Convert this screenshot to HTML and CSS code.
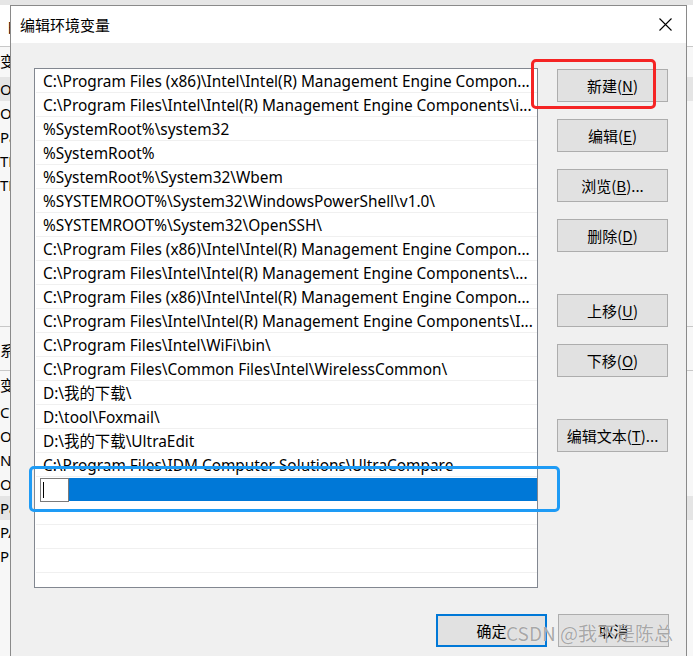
FILE: index.html
```html
<!DOCTYPE html>
<html lang="zh-CN">
<head>
    <meta charset="UTF-8">
    <title>编辑环境变量</title>
    <link rel="stylesheet" href="styles.css">
</head>
<body>
    <div class="desktop">
        <!-- window behind the dialog, only its edges show -->
        <div class="bg-window">
            <div class="bg-title">白</div>
            <div class="bg-section">
                <div class="bg-head">变</div>
                <div class="bg-row selected">On</div>
                <div class="bg-row">On</div>
                <div class="bg-row">Pa</div>
                <div class="bg-row">TE</div>
                <div class="bg-row">TM</div>
            </div>
            <div class="bg-section second">
                <div class="bg-label">系统</div>
                <div class="bg-head">变</div>
                <div class="bg-row">Co</div>
                <div class="bg-row">Or</div>
                <div class="bg-row">NU</div>
                <div class="bg-row">OS</div>
                <div class="bg-row selected">Pa</div>
                <div class="bg-row">PA</div>
                <div class="bg-row">PR</div>
            </div>
        </div>

        <div class="dialog">
            <div class="titlebar">
                <span class="title">编辑环境变量</span>
                <span class="close">
                    <svg width="13" height="13" viewBox="0 0 13 13">
                        <path d="M0.5 0.5 L12.5 12.5 M12.5 0.5 L0.5 12.5" stroke="#000" stroke-width="1.1" fill="none"/>
                    </svg>
                </span>
            </div>
            <div class="client">
                <div class="main">
                    <div class="listbox">
                        <div class="row">C:\Program Files (x86)\Intel\Intel(R) Management Engine Compon...</div>
                        <div class="row">C:\Program Files\Intel\Intel(R) Management Engine Components\i...</div>
                        <div class="row">%SystemRoot%\system32</div>
                        <div class="row">%SystemRoot%</div>
                        <div class="row">%SystemRoot%\System32\Wbem</div>
                        <div class="row">%SYSTEMROOT%\System32\WindowsPowerShell\v1.0\</div>
                        <div class="row">%SYSTEMROOT%\System32\OpenSSH\</div>
                        <div class="row">C:\Program Files (x86)\Intel\Intel(R) Management Engine Compon...</div>
                        <div class="row">C:\Program Files\Intel\Intel(R) Management Engine Components\...</div>
                        <div class="row">C:\Program Files (x86)\Intel\Intel(R) Management Engine Compon...</div>
                        <div class="row">C:\Program Files\Intel\Intel(R) Management Engine Components\I...</div>
                        <div class="row">C:\Program Files\Intel\WiFi\bin\</div>
                        <div class="row">C:\Program Files\Common Files\Intel\WirelessCommon\</div>
                        <div class="row">D:\我的下载\</div>
                        <div class="row">D:\tool\Foxmail\</div>
                        <div class="row">D:\我的下载\UltraEdit</div>
                        <div class="row">C:\Program Files\IDM Computer Solutions\UltraCompare</div>
                        <div class="row editing">
                            <span class="edit-box"><span class="caret"></span></span>
                            <span class="fill"></span>
                        </div>
                        <div class="row"></div>
                        <div class="row"></div>
                        <div class="row"></div>
                        <div class="row"></div>
                    </div>
                    <div class="side">
                        <div class="btn-group">
                            <button class="btn">新建(<u>N</u>)</button>
                            <button class="btn">编辑(<u>E</u>)</button>
                            <button class="btn">浏览(<u>B</u>)...</button>
                            <button class="btn">删除(<u>D</u>)</button>
                        </div>
                        <div class="btn-group">
                            <button class="btn">上移(<u>U</u>)</button>
                            <button class="btn">下移(<u>O</u>)</button>
                        </div>
                        <div class="btn-group">
                            <button class="btn">编辑文本(<u>T</u>)...</button>
                        </div>
                    </div>
                </div>
                <div class="footer">
                    <button class="btn default">确定</button>
                    <button class="btn">取消</button>
                </div>
            </div>
        </div>

        <!-- annotations drawn over the screenshot -->
        <div class="mark mark-red"></div>
        <div class="mark mark-blue"></div>
        <div class="watermark">CSDN @我不是陈总</div>
    </div>
</body>
</html>
```

FILE: styles.css
```css
* {
    margin: 0;
    padding: 0;
    box-sizing: border-box;
}

:root {
    --face: #f0f0f0;
    --btn: #e1e1e1;
    --btn-border: #adadad;
    --accent: #0078d7;
}

body {
    width: 693px;
    height: 656px;
    overflow: hidden;
    background: #e6e6e6;
    font-family: "Noto Sans", "Noto Sans CJK SC", sans-serif;
    font-size: 15px;
    color: #000;
}

.desktop {
    position: relative;
    width: 693px;
    height: 656px;
    overflow: hidden;
}

/* ---- background window ---- */

.bg-window {
    position: absolute;
    left: -3px;
    top: 5px;
    width: 699px;
    height: 660px;
    background: #f7f7f7;
    border-left: 1px solid #ccc;
}

.bg-title {
    height: 42px;
    line-height: 42px;
    padding-left: 9px;
    background: #fff;
    border-bottom: 1px solid #c8c8c8;
    font-family: "Noto Sans CJK SC", sans-serif;
}

.bg-section {
    padding-left: 2px;
}

.bg-head {
    height: 30px;
    line-height: 28px;
    font-family: "Noto Sans CJK SC", sans-serif;
}

.bg-row {
    height: 24px;
    line-height: 24px;
}

.bg-row.selected {
    background: #e5e5e5;
}

.bg-section.second {
    margin-top: 129px;
}

.bg-section.second .bg-head {
    height: 29px;
}

.bg-label {
    height: 45px;
    line-height: 45px;
    border-top: 1px solid #c8c8c8;
    border-bottom: 1px solid #c8c8c8;
    font-family: "Noto Sans CJK SC", sans-serif;
}

/* ---- dialog ---- */

.dialog {
    position: absolute;
    left: 10px;
    top: 5px;
    width: 677px;
    height: 660px;
    background: var(--face);
    border: 1px solid #8a8a8a;
    border-bottom: none;
}

.titlebar {
    height: 37px;
    background: #fff;
    display: flex;
    align-items: center;
    justify-content: space-between;
    padding: 0 14px 0 9px;
}

.title {
    font-family: "Noto Sans CJK SC", sans-serif;
    font-size: 15px;
    line-height: 1;
}

.close {
    display: flex;
    width: 13px;
    height: 13px;
}

.client {
    padding: 25px 17px 0 23px;
}

.main {
    display: flex;
    align-items: flex-start;
}

.listbox {
    width: 504px;
    height: 520px;
    background: #fff;
    border: 1px solid #828790;
    overflow: hidden;
}

.row {
    height: 24px;
    line-height: 23px;
    padding: 1px 0 0 7px;
    border-bottom: 1px solid #f0f0f0;
    margin-left: 1px;
    white-space: nowrap;
    overflow: hidden;
    font-family: "Noto Sans", "Noto Sans CJK SC", sans-serif;
    font-size: 15.4px;
}

.row.editing {
    display: flex;
    padding: 1px 0 0 4px;
    border-bottom: none;
    overflow: visible;
    position: relative;
    z-index: 1;
}

.edit-box {
    width: 29px;
    height: 24px;
    background: #fff;
    border: 1px solid #7a7a7a;
    display: flex;
    align-items: center;
    padding-left: 2px;
}

.caret {
    width: 1px;
    height: 16px;
    background: #000;
}

.fill {
    flex: 1;
    height: 23px;
    background: var(--accent);
}

.side {
    margin-left: 19px;
    margin-top: 1px;
    display: flex;
    flex-direction: column;
    gap: 42px;
}

.btn-group {
    display: flex;
    flex-direction: column;
    gap: 17px;
}

.btn {
    width: 111px;
    height: 33px;
    background: var(--btn);
    border: 1px solid var(--btn-border);
    font-family: "Noto Sans CJK SC", sans-serif;
    font-size: 15px;
    color: #000;
    line-height: 1;
}

.btn u {
    text-underline-offset: 2px;
}

.btn.default {
    border: 2px solid var(--accent);
}

.footer {
    margin-top: 26px;
    display: flex;
    justify-content: flex-end;
    gap: 11px;
}

/* ---- annotations ---- */

.mark {
    position: absolute;
    border-radius: 5px;
}

.mark-red {
    left: 531px;
    top: 59px;
    width: 125px;
    height: 50px;
    border: 3px solid #f52424;
}

.mark-blue {
    left: 29px;
    top: 466px;
    width: 531px;
    height: 46px;
    border: 3px solid #1e9bf5;
}

.watermark {
    position: absolute;
    left: 506px;
    top: 621px;
    font-family: "Noto Sans CJK SC", sans-serif;
    font-size: 19px;
    line-height: 24px;
    color: rgba(140, 140, 140, 0.75);
    text-shadow: 0 0 1px #fff;
    white-space: nowrap;
}
```
